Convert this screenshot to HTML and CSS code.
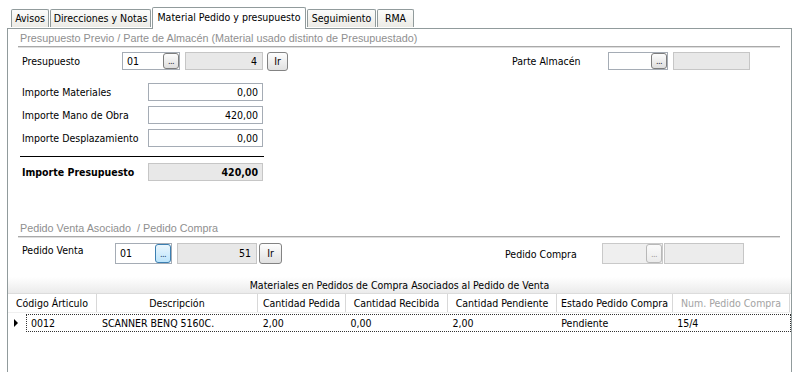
FILE: index.html
```html
<!DOCTYPE html>
<html lang="es">
<head>
    <meta charset="UTF-8">
    <title>Material Pedido y presupuesto</title>
    <link rel="stylesheet" href="styles.css">
</head>
<body>
    <div class="tabs">
        <div class="tab t-avisos">Avisos</div>
        <div class="tab t-dir">Direcciones y Notas</div>
        <div class="tab active t-mat">Material Pedido y presupuesto</div>
        <div class="tab t-seg">Seguimiento</div>
        <div class="tab t-rma">RMA</div>
    </div>

    <div class="panel">
        <div class="group-title">Presupuesto Previo / Parte de Almacén (Material usado distinto de Presupuestado)</div>

        <div class="row row-pres">
            <div class="half half-pres">
                <span class="lbl lbl-pres">Presupuesto</span>
                <div class="combo combo-pres"><span class="val">01</span><span class="dots">...</span></div>
                <div class="ro ro-pres">4</div>
                <div class="btn-ir">Ir</div>
            </div>
            <div class="half">
                <span class="lbl lbl-alm">Parte Almacén</span>
                <div class="combo combo-alm"><span class="val"></span><span class="dots">...</span></div>
                <div class="ro ro-alm"></div>
            </div>
        </div>

        <div class="imports">
            <div class="imp-row">
                <span class="lbl lbl-imp">Importe Materiales</span>
                <div class="num-input">0,00</div>
            </div>
            <div class="imp-row">
                <span class="lbl lbl-imp">Importe Mano de Obra</span>
                <div class="num-input">420,00</div>
            </div>
            <div class="imp-row">
                <span class="lbl lbl-imp">Importe Desplazamiento</span>
                <div class="num-input">0,00</div>
            </div>
            <div class="total-line"></div>
            <div class="imp-row">
                <span class="lbl lbl-imp bold">Importe Presupuesto</span>
                <div class="ro ro-total bold">420,00</div>
            </div>
        </div>

        <div class="group-title title-ped">Pedido Venta Asociado &nbsp;/ Pedido Compra</div>

        <div class="row row-ped">
            <div class="half half-ped">
                <span class="lbl lbl-ped">Pedido Venta</span>
                <div class="combo combo-ped"><span class="val">01</span><span class="dots dots-hot">...</span></div>
                <div class="ro ro-ped">51</div>
                <div class="btn-ir btn-ir-ped">Ir</div>
            </div>
            <div class="half">
                <span class="lbl lbl-comp">Pedido Compra</span>
                <div class="combo combo-comp disabled"><span class="val"></span><span class="dots">...</span></div>
                <div class="ro ro-comp"></div>
            </div>
        </div>

        <div class="grid">
            <div class="grid-caption">Materiales en Pedidos de Compra Asociados al Pedido de Venta</div>
            <div class="grid-head">
                <div class="hc c1">Código Árticulo</div>
                <div class="hc c2">Descripción</div>
                <div class="hc c3">Cantidad Pedida</div>
                <div class="hc c4">Cantidad Recibida</div>
                <div class="hc c5">Cantidad Pendiente</div>
                <div class="hc c6">Estado Pedido Compra</div>
                <div class="hc c7 muted">Num. Pedido Compra</div>
            </div>
            <div class="grid-row">
                <div class="indicator"><span class="arrow"></span></div>
                <div class="rowcells">
                    <div class="dc d1">0012</div>
                    <div class="dc c2">SCANNER BENQ 5160C.</div>
                    <div class="dc c3">2,00</div>
                    <div class="dc c4">0,00</div>
                    <div class="dc c5">2,00</div>
                    <div class="dc c6">Pendiente</div>
                    <div class="dc c7">15/4</div>
                </div>
            </div>
        </div>
    </div>
</body>
</html>
```

FILE: styles.css
```css
* {
    box-sizing: border-box;
}

body {
    margin: 0;
    width: 800px;
    height: 372px;
    overflow: hidden;
    background: #fff;
    color: #000;
    font-family: "DejaVu Sans Condensed", "DejaVu Sans", sans-serif;
    font-stretch: condensed;
    font-size: 10.5px;
}

/* tab strip */
.tabs {
    display: flex;
    align-items: flex-end;
    height: 28px;
    padding-left: 11px;
}

.tab {
    height: 18px;
    margin-bottom: 1px;
    margin-right: 1px;
    border: 1px solid #919b9c;
    border-bottom: none;
    border-radius: 2px 2px 0 0;
    background: linear-gradient(to bottom, #fcfcfb, #ecebe6);
    text-align: center;
    line-height: 17px;
    white-space: nowrap;
}

.tab.active {
    position: relative;
    height: 22px;
    margin-bottom: -1px;
    background: #fff;
    line-height: 19px;
}

.t-avisos { width: 38px; }
.t-dir { width: 101px; }
.t-mat { width: 154px; }
.t-seg { width: 69px; }
.t-rma { width: 37px; }

.panel {
    margin-left: 7px;
    width: 785px;
    height: 360px;
    border: 1px solid #919b9c;
    background: #fff;
}

/* group headings */
.group-title {
    margin: 0 11px 0 10px;
    height: 18px;
    padding: 2px 2px 0;
    line-height: 14px;
    font-family: "Liberation Sans", Arial, sans-serif;
    font-stretch: normal;
    font-size: 10.8px;
    color: #8f8f8f;
    border-bottom: 1px solid #a9a9a9;
    box-shadow: 0 1px 0 #dedede;
}

.title-ped {
    margin-top: 38px;
}

.row {
    display: flex;
    padding-left: 14px;
}

.half {
    display: flex;
    align-items: center;
}

.half-pres { width: 490px; }
.half-ped { width: 483px; align-items: flex-start; }

.row-pres {
    margin-top: 5px;
    height: 18px;
}

.row-ped {
    margin-top: 6px;
    height: 21px;
}

.lbl {
    white-space: nowrap;
    line-height: 14px;
}

.lbl-pres { width: 100px; }
.lbl-alm { width: 96px; }
.lbl-ped { width: 93px; }
.lbl-comp { width: 97px; }
.lbl-imp { width: 126px; }

.bold {
    font-weight: bold;
}

/* inputs */
.combo {
    display: flex;
    justify-content: space-between;
    height: 18px;
    border: 1px solid #a5acb5;
    background: #fff;
}

.combo .val {
    padding-left: 4px;
    line-height: 16px;
}

.dots {
    width: 16px;
    height: 16px;
    border: 1px solid #7d7d7d;
    border-radius: 3px;
    background: linear-gradient(to bottom, #fdfdfd, #dedede);
    text-align: center;
    font-size: 9px;
    line-height: 15px;
    letter-spacing: -0.5px;
    color: #222;
}

.dots-hot {
    border-color: #3c7fb1;
    background: linear-gradient(to bottom, #eaf6fd, #bde5fc);
    color: #10406a;
}

.combo-pres { width: 58px; }
.combo-alm { width: 60px; }
.combo-ped { width: 57px; height: 21px; }
.combo-ped .val { line-height: 19px; }
.combo-ped .dots { height: 19px; line-height: 18px; }
.combo-comp { width: 61px; height: 21px; }
.combo-comp .dots { height: 19px; line-height: 18px; }

.combo.disabled {
    border-color: #c9c9c9;
    background: #efefef;
}

.combo.disabled .dots {
    border-color: #b8b8b8;
    background: linear-gradient(to bottom, #fafafa, #ebebeb);
    color: #9a9a9a;
}

.ro {
    height: 18px;
    padding-right: 5px;
    border: 1px solid #c6c6c6;
    background: #e8e8e8;
    text-align: right;
    line-height: 16px;
}

.ro-pres { width: 78px; margin-left: 5px; }
.ro-alm { width: 77px; margin-left: 5px; }
.ro-ped { width: 80px; height: 21px; margin-left: 5px; line-height: 19px; }
.ro-comp { width: 80px; height: 21px; margin-left: 1px; background: #ececec; }
.ro-total { width: 115px; padding-right: 4px; }

.btn-ir {
    width: 21px;
    height: 19px;
    margin-left: 4px;
    border: 1px solid #838383;
    border-radius: 3px;
    background: linear-gradient(to bottom, #fdfdfd, #e1e1e1);
    text-align: center;
    line-height: 17px;
}

.btn-ir-ped {
    width: 23px;
    height: 21px;
    margin-left: 2px;
    line-height: 19px;
}

/* amounts */
.imports {
    margin-top: 13px;
    padding-left: 14px;
    display: flex;
    flex-direction: column;
    gap: 5px;
}

.imp-row {
    display: flex;
    align-items: center;
    height: 18px;
}

.num-input {
    width: 115px;
    height: 18px;
    padding-right: 4px;
    border: 1px solid #a5acb5;
    background: #fff;
    text-align: right;
    line-height: 16px;
}

.total-line {
    width: 244px;
    height: 1px;
    margin: 4px 0 1px -2px;
    background: #000;
}

/* grid */
.grid {
    margin-top: 13px;
}

.grid-caption {
    height: 16px;
    background: linear-gradient(to bottom, #ffffff, #ebebeb);
    text-align: center;
    line-height: 16px;
}

.grid-head {
    display: flex;
    height: 20px;
    border-top: 1px solid #dcdcdc;
    border-bottom: 1px solid #f0f0f0;
}

.hc {
    border-right: 1px solid #d8d8d8;
    text-align: center;
    line-height: 19px;
    white-space: nowrap;
    overflow: hidden;
}

.c1 { width: 89px; }
.c2 { width: 161px; }
.c3 { width: 88px; }
.c4 { width: 102px; }
.c5 { width: 109px; }
.c6 { width: 116px; }
.c7 { width: 117px; }

.muted {
    color: #a3a3a3;
}

.grid-row {
    display: flex;
    height: 18px;
    margin-top: 1px;
}

.indicator {
    width: 18px;
    display: flex;
    align-items: center;
    padding-left: 6px;
}

.arrow {
    width: 0;
    height: 0;
    border-top: 4px solid transparent;
    border-bottom: 4px solid transparent;
    border-left: 4px solid #000;
}

.rowcells {
    display: flex;
    border: 1px dotted #333;
    width: 765px;
}

.dc {
    padding-left: 4px;
    line-height: 16px;
    white-space: nowrap;
}

.d1 { width: 71px; }
```
